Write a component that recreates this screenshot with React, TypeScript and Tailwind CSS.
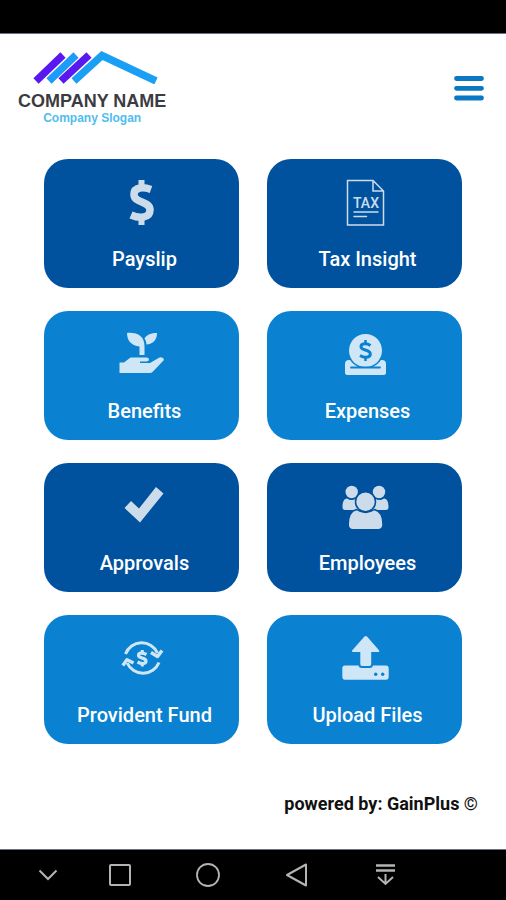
import React from 'react';

const PayslipIcon = () => (
  <svg viewBox="0 0 60 52" className="w-[60px] h-[52px] opacity-80" fill="none" stroke="currentColor" aria-hidden="true">
    <path strokeWidth="7.5" d="M39 13.5C32 11 22 10.500 22 18.500C22 27.500 38 24.500 38 34C38 42.500 27 42.500 19 39" />
    <path strokeWidth="6" d="M29.500 4v7M29.500 42v7" />
  </svg>
);

const TaxIcon = () => (
  <svg viewBox="0 0 60 52" className="w-[60px] h-[52px] opacity-80" fill="none" stroke="currentColor" strokeWidth="1.5" aria-hidden="true">
    <path d="M12.500 4.500H38l10.500 10.500V49h-36zM38 4.500V15h10.500" />
    <path d="M19 36h24M19 40.500h12.500" strokeLinecap="round" />
    <text x="31" y="32" textAnchor="middle" fontSize="14" fontWeight="500" fill="currentColor" stroke="none">
      TAX
    </text>
  </svg>
);

const BenefitsIcon = () => (
  <svg viewBox="0 0 60 52" className="w-[60px] h-[52px] opacity-80" fill="currentColor" aria-hidden="true">
    <path d="M15 5C25 4 32.500 8 32.500 18V27H27.500V18.500C20 18 15 13 15 5Z" />
    <path d="M45 5C45 12 41 16 34.500 16.500C34 13 33.500 12 32.500 10.500C35 6.500 39 5 45 5Z" />
    <path d="M7.500 34.500H12L18.500 29.500H34.500Q37 29.500 37 31.500T34.500 33.500H28V35H38L47.500 29.500Q49 28.800 50.500 29.800Q52.500 31 51.500 32.500L40.500 44Q39.500 45 38 45H7.500Z" />
  </svg>
);

const ExpensesIcon = () => (
  <svg viewBox="0 0 60 52" className="w-[60px] h-[52px] opacity-80" fill="currentColor" aria-hidden="true">
    <path d="M10 36Q10 32 14 32H47Q51 32 51 36V44Q51 47 48 47H13Q10 47 10 44Z" />
    <circle cx="30.500" cy="22.500" r="18" className="fill-[#0a82d1]" />
    <path d="M10 40h41v4q0 3-3 3H13q-3 0-3-3z" />
    <circle cx="30.500" cy="22.500" r="16.500" />
    <g className="stroke-[#0a82d1]" fill="none">
      <path strokeWidth="1.800" strokeLinecap="round" d="M16 39.500H45" />
      <path strokeWidth="3" d="M35.500 17.500C32 15.200 26 15 26 18.800C26 23 35.300 21 35.300 26C35.300 30 29 30 25 27.500" />
      <path strokeWidth="2.500" d="M30.500 12v4M30.500 29v4" />
    </g>
  </svg>
);

const ApprovalsIcon = () => (
  <svg viewBox="0 0 60 52" className="w-[60px] h-[52px] opacity-80" fill="currentColor" aria-hidden="true">
    <path d="M44 7L51.500 13.500L28 42.500L12.500 28L19 21L27 28.500Z" />
  </svg>
);

const EmployeesIcon = () => (
  <svg viewBox="0 0 60 52" className="w-[60px] h-[52px] opacity-80" fill="currentColor" aria-hidden="true">
    <circle cx="16.700" cy="12" r="6.200" />
    <circle cx="44" cy="12" r="6.200" />
    <path d="M7.500 27C7.500 22 9 18.500 12 18.500Q16.500 21.500 21 18.500L24 30H10Q7.500 30 7.500 27Z" />
    <path d="M53.500 27C53.500 22 52 18.500 49 18.500Q44.500 21.500 40 18.500L37 30H51Q53.500 30 53.500 27Z" />
    <g className="stroke-[#00529f]" strokeWidth="1.500">
      <path d="M21.500 29.500Q30.500 35.500 39.500 29.500C45.500 31 48 37 48 44.500Q48 49.700 43 49.700H18Q13.200 49.700 13.200 44.500C13.200 37 15.500 31 21.500 29.500Z" />
      <circle cx="30.500" cy="21.700" r="10" />
    </g>
  </svg>
);

const ProvidentIcon = () => (
  <svg viewBox="0 0 60 52" className="w-[60px] h-[52px] opacity-80" fill="none" stroke="currentColor" strokeWidth="3" aria-hidden="true">
    <path d="M13.500 22A17.300 17.300 0 0 1 45.500 21M47 30.500A17.300 17.300 0 0 1 15.200 31" />
    <path strokeWidth="3.500" strokeLinejoin="round" d="M39 20.500L45.500 24.500L50 18.500M10.800 33.500L15 27.800L21.500 31" />
    <path strokeWidth="3.200" d="M34.500 22.500C31 20.500 26.500 20.500 26.500 23.300C26.500 27 34 25.200 34 29C34 32.300 29 32 25.500 30" />
    <path strokeWidth="3" d="M30.300 18v3.500M30.300 31v3.500" />
  </svg>
);

const UploadIcon = () => (
  <svg viewBox="0 0 60 52" className="w-[60px] h-[52px] opacity-80" fill="currentColor" aria-hidden="true">
    <path d="M10 33.500H23.500Q24 36 27 36H34.500Q37.500 36 38 33.500H51Q53.700 33.500 53.700 36.500V44.500Q53.700 47.700 51 47.700H10Q7.300 47.700 7.300 44.500V36.500Q7.300 33.500 10 33.500Z" />
    <path d="M29.500 4.600Q30.700 3.500 32 4.600L44 18.200Q45 20 43.500 20H36.200V32Q36.200 34 34.500 34H27Q25.300 34 25.300 32V20H18Q16.300 20 17.300 18.200Z" />
    <g className="fill-[#0a82d1]">
      <circle cx="40.700" cy="42.300" r="1.700" />
      <circle cx="47.700" cy="42.300" r="1.700" />
    </g>
  </svg>
);

const tiles = [
  { label: 'Payslip', Icon: PayslipIcon, dark: true },
  { label: 'Tax Insight', Icon: TaxIcon, dark: true },
  { label: 'Benefits', Icon: BenefitsIcon, dark: false },
  { label: 'Expenses', Icon: ExpensesIcon, dark: false },
  { label: 'Approvals', Icon: ApprovalsIcon, dark: true },
  { label: 'Employees', Icon: EmployeesIcon, dark: true },
  { label: 'Provident Fund', Icon: ProvidentIcon, dark: false },
  { label: 'Upload Files', Icon: UploadIcon, dark: false },
];

const App = () => {
  return (
    <div className="min-h-screen flex flex-col bg-white font-[Roboto,sans-serif]">
      {/* Status bar */}
      <div className="h-[34px] bg-black border-b border-gray-500" />

      {/* Header */}
      <header className="flex items-start justify-between pl-[18px] pr-5 pt-4">
        <div className="flex flex-col items-center font-['Liberation_Sans',Arial,sans-serif] font-bold">
          <svg viewBox="0 0 134 34" className="w-[134px] h-[34px]" fill="none" strokeWidth="7.500" aria-hidden="true">
            <path d="M11 31L38 5" stroke="#5a18f0" />
            <path d="M24 31L51 5" stroke="#1e9bf7" />
            <path d="M36 31L64 5" stroke="#5a18f0" />
            <path d="M49 31L77 5.500L131 31" stroke="#1a9ff5" />
          </svg>
          <span className="mt-[7px] text-[18px] leading-5 text-[#3c3c40]">COMPANY NAME</span>
          <span className="text-[12px] leading-[14px] text-[#4fbdf0]">Company Slogan</span>
        </div>
        <button type="button" aria-label="Menu" className="mt-5 p-0.5 text-[#0b78c4]">
          <svg viewBox="0 0 30 32" className="w-[30px] h-[32px]" stroke="currentColor" strokeWidth="4.800" strokeLinecap="round" aria-hidden="true">
            <path d="M2.500 6.500h25M2.500 16.300h25M2.500 26h25" />
          </svg>
        </button>
      </header>

      {/* Menu tiles */}
      <main className="grid grid-cols-2 gap-x-7 gap-y-[23px] px-11 pt-[34px]">
        {tiles.map(({ label, Icon, dark }) => (
          <button
            type="button"
            key={label}
            className={`h-[129px] rounded-3xl flex flex-col items-center pt-[17px] text-white ${
              dark ? 'bg-[#00529f]' : 'bg-[#0a82d1]'
            }`}
          >
            <Icon />
            <span className="mt-[17px] pl-1.5 text-[20px] leading-7 font-medium">{label}</span>
          </button>
        ))}
      </main>

      <footer className="mt-12 pr-7 text-right text-[18px] leading-6 font-bold text-[#111]">
        powered by: GainPlus ©
      </footer>

      {/* System navigation */}
      <nav className="mt-auto h-[51px] flex items-center gap-16 pl-9 bg-black border-t border-gray-500 text-[#b4b4b4]">
        <button type="button" aria-label="Hide" className="-mr-4">
          <svg viewBox="0 0 24 24" className="size-6" fill="none" stroke="currentColor" strokeWidth="2">
            <path d="M3.500 7.500L12 16L20.500 7.500" />
          </svg>
        </button>
        <button type="button" aria-label="Recent apps">
          <svg viewBox="0 0 24 24" className="size-6" fill="none" stroke="currentColor" strokeWidth="2">
            <rect x="2" y="2" width="20" height="20" rx="1" />
          </svg>
        </button>
        <button type="button" aria-label="Home">
          <svg viewBox="0 0 24 24" className="size-6" fill="none" stroke="currentColor" strokeWidth="1.800">
            <circle cx="12" cy="12" r="11" />
          </svg>
        </button>
        <button type="button" aria-label="Back">
          <svg viewBox="0 0 24 24" className="size-6" fill="none" stroke="currentColor" strokeWidth="2" strokeLinejoin="round">
            <path d="M3 12L22 1.500V22.500Z" />
          </svg>
        </button>
        <button type="button" aria-label="Notifications">
          <svg viewBox="0 0 24 24" className="size-6" fill="none" stroke="currentColor" strokeWidth="2.300">
            <path d="M4 2.500h19M4 7.500h19" />
            <path strokeWidth="2" d="M13.500 11V21M6 14L13.500 21L21 14" />
          </svg>
        </button>
      </nav>
    </div>
  );
};

export default App;
